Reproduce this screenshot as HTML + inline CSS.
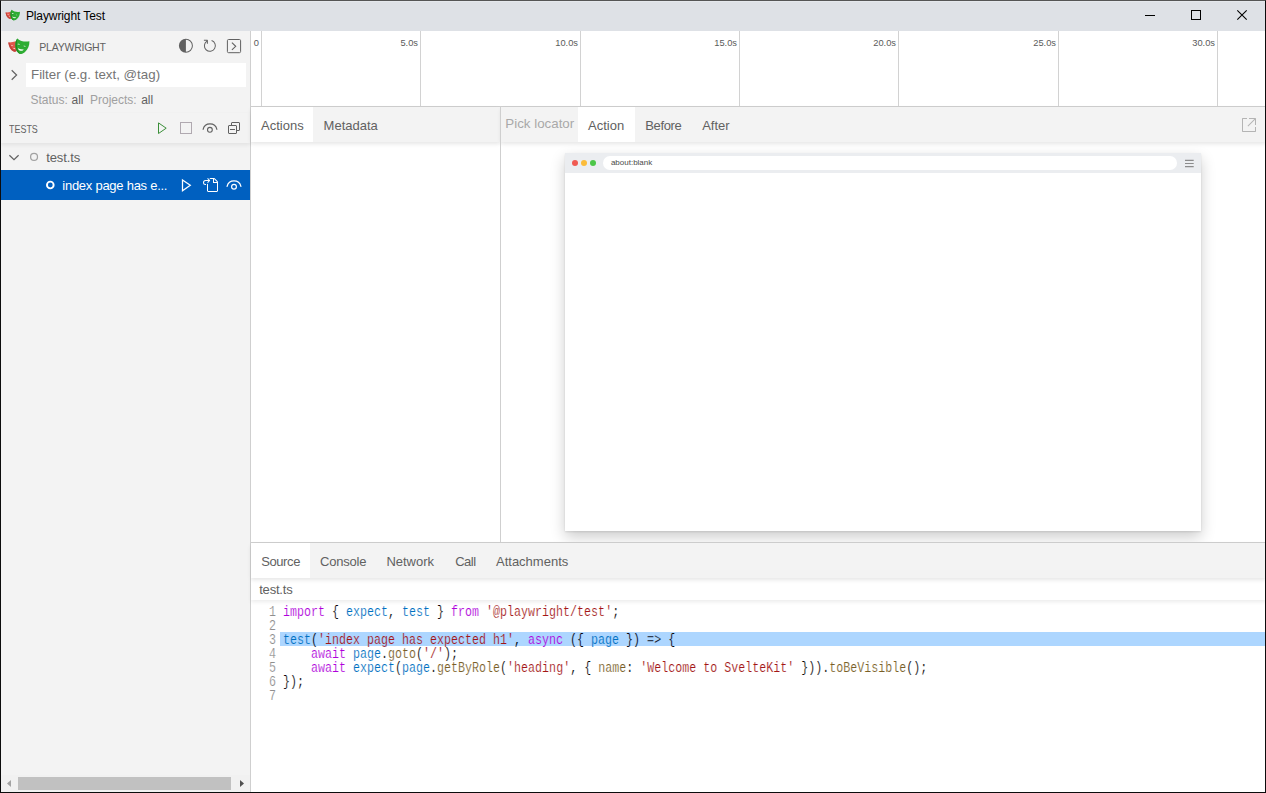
<!DOCTYPE html>
<html>
<head>
<meta charset="utf-8">
<title>Playwright Test</title>
<style>
*{box-sizing:border-box;margin:0;padding:0}
html,body{width:1266px;height:793px;overflow:hidden;background:#fff}
body{font-family:"Liberation Sans",sans-serif;font-size:13px;color:#616161;position:relative}
.abs{position:absolute}
.t{position:absolute;white-space:nowrap;line-height:1}
svg{position:absolute;overflow:visible}
/* window frame */
#frame{left:0;top:0;width:1266px;height:793px;border:1px solid #0c0c0c;border-top-color:#555;z-index:50;pointer-events:none}
#frame2{left:1px;top:1px;width:1264px;height:30px;border-top:1px solid #e5e8ec;border-left:1px solid #e5e8ec;z-index:49}
#titlebar{left:0;top:0;width:1266px;height:31px;background:#dee1e6}
#sidebar{left:0;top:31px;width:250px;height:762px;background:#f3f3f3}
#sideborder{left:250px;top:31px;width:1px;height:762px;background:#cfcfcf}
#filter{left:26px;top:63px;width:220px;height:24px;background:#fff}
#selrow{left:1px;top:170px;width:249px;height:30px;background:#0060c0}
/* timeline */
.grid{position:absolute;top:31px;width:1px;height:75px;background:#d2d2d2}
.tl{position:absolute;top:38.900px;font-size:9.300px;color:#5a5a5a;line-height:1;text-align:right;width:40px;white-space:nowrap}
#tlborder{left:251px;top:106px;width:1015px;height:1px;background:#cfcfcf}
/* tab bars */
.tabbar{position:absolute;background:#f3f3f3;box-shadow:0 2px 4px rgba(0,0,0,.10)}
.tabsel{position:absolute;background:#fff}
.tab{position:absolute;white-space:nowrap;line-height:1;font-size:13px;color:#616161}
/* code */
.ln{position:absolute;left:251px;width:25px;text-align:right;color:#8e8e8e}
.code,.ln{font-family:"Liberation Mono",monospace;font-size:15px;line-height:14px;height:14px;white-space:pre}
.code{position:absolute;left:283.400px;color:#000;-webkit-text-stroke:.18px #fff;transform:scaleX(.7778);transform-origin:0 0}
.ln span{display:inline-block;-webkit-text-stroke:.18px #fff;transform:scaleX(.7778);transform-origin:100% 0}
.k{color:#af00db}.v{color:#0070c1}.p{color:#795e26}.s{color:#a31515}
</style>
</head>
<body>
<!-- title bar -->
<div class="abs" id="titlebar"></div>
<div class="t" id="title" style="left:25.900px;top:10.300px;font-size:12px;color:#000;letter-spacing:-.1px">Playwright Test</div>

<!-- sidebar -->
<div class="abs" id="sidebar"></div>
<div class="abs" id="sideborder"></div>
<div class="t" id="pw" style="left:39.300px;top:42.200px;font-size:10.500px;color:#616161;letter-spacing:-.23px">PLAYWRIGHT</div>
<div class="abs" id="filter"></div>
<div class="t" id="ph" style="left:31px;top:68px;font-size:13.33px;color:#757575">Filter (e.g. text, @tag)</div>
<div class="t" id="st1" style="left:30.500px;top:93.500px;font-size:12px;color:#a0a0a0">Status:</div>
<div class="t" id="st2" style="left:71.500px;top:93.500px;font-size:12px;color:#616161">all</div>
<div class="t" id="st3" style="left:90px;top:93.500px;font-size:12px;color:#a0a0a0">Projects:</div>
<div class="t" id="st4" style="left:141.200px;top:93.500px;font-size:12px;color:#616161">all</div>
<div class="abs" style="left:1px;top:113px;width:249px;height:30px;background:#f3f3f3;box-shadow:0 2px 4px rgba(0,0,0,.07)"></div>
<div class="t" id="tests" style="left:9.300px;top:124.200px;font-size:10.500px;color:#616161;transform:scaleX(.852);transform-origin:0 0">TESTS</div>
<div class="t" id="f1" style="left:46.200px;top:151px;font-size:13px;color:#616161;letter-spacing:-.12px">test.ts</div>
<div class="abs" id="selrow"></div>
<div class="t" id="f2" style="left:62.300px;top:179px;font-size:13px;color:#fff;letter-spacing:-.26px">index page has e...</div>

<!-- timeline -->
<div class="grid" style="left:261px"></div>
<div class="grid" style="left:420px"></div>
<div class="grid" style="left:580px"></div>
<div class="grid" style="left:739px"></div>
<div class="grid" style="left:898px"></div>
<div class="grid" style="left:1058px"></div>
<div class="grid" style="left:1217px"></div>
<div class="tl" style="left:253.700px;text-align:left">0</div>
<div class="tl" style="left:378px">5.0s</div>
<div class="tl" style="left:538px">10.0s</div>
<div class="tl" style="left:697px">15.0s</div>
<div class="tl" style="left:856px">20.0s</div>
<div class="tl" style="left:1016px">25.0s</div>
<div class="tl" style="left:1175px">30.0s</div>

<div class="abs" id="tlborder"></div>

<!-- panels -->
<div class="tabbar" style="left:251px;top:107px;width:249px;height:35px"></div>
<div class="tabsel" style="left:251px;top:107px;width:62px;height:35px"></div>
<div class="tab" id="ta" style="left:261px;top:119px">Actions</div>
<div class="tab" id="tm" style="left:323.600px;top:119px">Metadata</div>
<div class="abs" style="left:500px;top:106px;width:1px;height:436px;background:#cfcfcf;z-index:3"></div>

<div class="tabbar" style="left:501px;top:107px;width:765px;height:35px"></div>
<div class="tabsel" style="left:578px;top:107px;width:56.700px;height:35px"></div>
<div class="tab" id="tp" style="left:505.300px;top:117.400px;color:#a9a9a9;font-size:13.33px">Pick locator</div>
<div class="tab" id="tc" style="left:588px;top:119px">Action</div>
<div class="tab" id="tb" style="left:645.200px;top:119px;letter-spacing:-.33px">Before</div>
<div class="tab" id="tf" style="left:702.200px;top:119px">After</div>

<!-- browser frame -->
<div class="abs" id="bf" style="left:565px;top:153px;width:636px;height:378px;background:#fff;box-shadow:0 6px 14px rgba(0,0,0,.2),0 1px 2px rgba(0,0,0,.1)"></div>
<div class="abs" id="bfh" style="left:565px;top:153px;width:636px;height:20px;background:#ebedf0"></div>
<div class="abs" style="left:603.300px;top:156.200px;width:573.500px;height:13.600px;border-radius:7px;background:#fff"></div>
<div class="t" id="ab" style="left:610.900px;top:158.700px;font-size:8px;color:#4a4a4a">about:blank</div>
<div class="abs" style="left:572.200px;top:160.200px;width:6.200px;height:6.200px;border-radius:3.100px;background:#f05a52"></div>
<div class="abs" style="left:581.200px;top:160.200px;width:6.200px;height:6.200px;border-radius:3.100px;background:#fbbc3a"></div>
<div class="abs" style="left:590.200px;top:160.200px;width:6.200px;height:6.200px;border-radius:3.100px;background:#4cc648"></div>

<!-- bottom -->
<div class="abs" style="left:251px;top:542px;width:1015px;height:1px;background:#cfcfcf"></div>
<div class="abs" style="left:251px;top:578px;width:1015px;height:22px;background:#fff;box-shadow:0 2px 4px rgba(0,0,0,.08)"></div>
<div class="tabbar" style="left:251px;top:543px;width:1015px;height:35px"></div>
<div class="tabsel" style="left:251px;top:543px;width:59px;height:35px"></div>
<div class="tab" id="b1" style="left:261.200px;top:555px;letter-spacing:-.4px">Source</div>
<div class="tab" id="b2" style="left:320px;top:555px;letter-spacing:-.2px">Console</div>
<div class="tab" id="b3" style="left:386.400px;top:555px">Network</div>
<div class="tab" id="b4" style="left:455.200px;top:555px;letter-spacing:-.5px">Call</div>
<div class="tab" id="b5" style="left:496px;top:555px">Attachments</div>
<div class="t" id="fn" style="left:259.200px;top:583px;font-size:13px;color:#616161;letter-spacing:-.2px">test.ts</div>

<!-- code -->
<div class="abs" id="hl" style="left:280px;top:632px;width:986px;height:14px;background:#add6ff"></div>
<div class="ln" style="top:606px"><span>1</span></div><div class="code" style="top:606px"><span class="k">import</span> { <span class="v">expect</span>, <span class="v">test</span> } <span class="k">from</span> <span class="s">'@playwright/test'</span>;</div>
<div class="ln" style="top:620px"><span>2</span></div><div class="code" style="top:620px"></div>
<div class="ln" style="top:634px"><span>3</span></div><div class="code" style="top:634px;-webkit-text-stroke-color:#add6ff"><span class="v">test</span>(<span class="s">'index page has expected h1'</span>, <span class="k">async</span> ({ <span class="v">page</span> }) =&gt; {</div>
<div class="ln" style="top:648px"><span>4</span></div><div class="code" style="top:648px">    <span class="k">await</span> <span class="v">page</span>.<span class="p">goto</span>(<span class="s">'/'</span>);</div>
<div class="ln" style="top:662px"><span>5</span></div><div class="code" style="top:662px">    <span class="k">await</span> <span class="v">expect</span>(<span class="v">page</span>.<span class="p">getByRole</span>(<span class="s">'heading'</span>, { <span class="p">name</span>: <span class="s">'Welcome to SvelteKit'</span> })).<span class="p">toBeVisible</span>();</div>
<div class="ln" style="top:676px"><span>6</span></div><div class="code" style="top:676px">});</div>
<div class="ln" style="top:690px"><span>7</span></div><div class="code" style="top:690px"></div>


<svg id="icons" width="1266" height="793" viewBox="0 0 1266 793" style="left:0;top:0;z-index:20" fill="none">
<defs><g id="mask">
<path d="M6.300 10.400 C8.600 10.600 11.400 10.200 13.900 9.300 L14.600 18.900 C13.600 19.800 12.300 19.900 11.200 19.300 C8.600 17.900 6.900 14.600 6.300 10.400Z" fill="#e2574c"/>
<path d="M6.300 10.400 C6.900 14.600 8.600 17.900 11.200 19.300 C12.300 19.900 13.600 19.800 14.600 18.900 L14.500 17.600 C12.500 18.600 9.200 16.800 7.600 10.500Z" fill="#c2423a"/>
<path d="M8.900 13.600c.5-.5 1.500-.6 2.300-.2-.6.500-1.600.600-2.300.2z M11 16.900c.6-.5 1.500-.7 2.300-.4-.5.600-1.500.800-2.300.4z" fill="#fff"/>
<path d="M15.300 6.400 C18.600 9.200 22.900 10.200 27.400 9.300 C27.600 13.500 26 17.500 23 20 C21.800 21 20.600 21.800 19.300 22 C18.300 22.100 17.300 21.700 16.400 21 C14.200 19.200 13 15.500 13.500 11 C13.700 9.300 14.400 7.700 15.300 6.400Z" fill="#2ead33"/>
<path d="M15.300 6.400 C14.400 7.700 13.700 9.300 13.500 11 C13 15.500 14.200 19.200 16.400 21 C17.300 21.700 18.300 22.100 19.300 22 C16.800 20.800 14.900 17.300 14.900 12.500 C14.900 10.200 15 8.200 15.300 6.400Z" fill="#1d8d22"/>
<path d="M15.200 12.700c.8-.5 2.100-.4 3 .3-.9.700-2.200.5-3-.3z M21.100 14.500c.8-.5 2.100-.3 2.900.5-1 .6-2.200.4-2.900-.5z" fill="#1d8d22"/>
<path d="M15.400 12.200c.7-.7 1.900-.6 2.800.1-.9.400-2 .4-2.800-.1z M21.300 14c.8-.6 2-.4 2.700.4-.9.300-1.900.2-2.700-.4z M15.800 16.200c1.900.9 3.900 1.300 6 1.300-.7 1-1.900 1.500-3.200 1.200-1.300-.3-2.300-1.200-2.800-2.500z" fill="#fff"/>
</g></defs>
<!-- title icon -->
<use href="#mask" transform="translate(1.300,5.400) scale(.68)"/>
<!-- window controls -->
<path d="M1145 15.500H1155" stroke="#000" stroke-width="1"/>
<rect x="1191.500" y="10.500" width="9" height="9" stroke="#000" stroke-width="1"/>
<path d="M1237.300 10.300L1246.700 19.700M1246.700 10.300L1237.300 19.700" stroke="#000" stroke-width="1.100"/>
<!-- sidebar logo -->
<use href="#mask" transform="translate(2,32)"/>
<!-- color mode -->
<g transform="translate(177.900,37.800)" fill="#616161"><path d="M8 1a7 7 0 1 0 0 14A7 7 0 0 0 8 1zm0 13V2a6 6 0 1 1 0 12z"/></g>
<!-- refresh -->
<g transform="translate(201.900,37.800)" fill="#616161"><path d="M4.681 3H2V2h3.500l.5.5V6H5V4a5 5 0 1 0 4.530-.761l.302-.954A6 6 0 1 1 4.681 3z"/></g>
<!-- terminal -->
<rect x="227.400" y="39.500" width="13.200" height="13.200" rx="1.200" stroke="#616161"/>
<path d="M231.900 42.700L235.700 46.300L231.900 49.900" stroke="#616161" stroke-width="1.100"/>
<!-- filter chevron -->
<path d="M11.700 70.300L16.600 75L11.700 79.700" stroke="#616161" stroke-width="1.200"/>
<!-- tests toolbar -->
<path d="M158.500 122.900L166.200 128.200L158.500 133.500Z" stroke="#3a8f38" stroke-width="1"/>
<rect x="180.500" y="122.500" width="11" height="11" stroke="#b0a9b0" stroke-width="1"/>
<path d="M203.100 129.300A7.100 7.100 0 0 1 216.900 129.300" stroke="#616161" stroke-width="1.150" stroke-linecap="round"/>
<circle cx="209.900" cy="129.800" r="2.400" stroke="#616161" stroke-width="1.100"/>
<g transform="translate(226,120)" fill="#616161"><path d="M9 9H4v1h5V9z"/><path fill-rule="evenodd" d="M5 3l1-1h7l1 1v7l-1 1h-2v2l-1 1H3l-1-1V6l1-1h2V3zm1 2h4l1 1v4h2V3H6v2zm4 1H3v7h7V6z"/></g>
<!-- tree -->
<path d="M9.400 155.200L14 159.600L18.600 155.200" stroke="#616161" stroke-width="1.200"/>
<circle cx="34.050" cy="156.900" r="3.450" stroke="#a2a2a2" stroke-width="1.250"/>
<circle cx="50.300" cy="185" r="3.350" stroke="#fff" stroke-width="1.900"/>
<!-- row actions -->
<path d="M182.500 179.900L190.300 185.300L182.500 190.700Z" stroke="#fff" stroke-width="1.250"/>
<g transform="translate(202,177)" fill="#fff"><path d="M6 5.914l2.060-2.060v-.708L5.915 1l-.707.707.043.043.25.25 1 1h-3a2.500 2.500 0 0 0 0 5H4V7h-.5a1.500 1.500 0 1 1 0-3h3L5.207 5.293 5.914 6 6 5.914zM11 2H8.328l-1-1H12l.71.290 3 3L16 5v9l-1 1H6l-1-1V6.500l1 .847V14h9V6h-4V2zm1 0v3h3l-3-3z"/></g>
<path d="M227.100 186.300A7.100 7.100 0 0 1 240.900 186.300" stroke="#fff" stroke-width="1.250" stroke-linecap="round"/>
<circle cx="234" cy="186.800" r="2.400" stroke="#fff" stroke-width="1.200"/>
<!-- popout -->
<g transform="translate(1241,117)" fill="#b4b4b4"><path d="M1.500 1H6v1H2v12h12v-4h1v4.500l-.5.5h-13l-.5-.5v-13l.5-.5z"/><path d="M15 1.500V8h-1V2.707L7.243 9.465l-.707-.708L13.293 2H8V1h6.500l.5.5z"/></g>
<!-- hamburger -->
<path d="M1185 160.400H1193.700M1185 163.500H1193.700M1185 166.600H1193.700" stroke="#8c8c8c" stroke-width="1.200"/>
<!-- scrollbar -->
<rect x="1" y="775" width="249" height="17" fill="#f1f1f1"/>
<rect x="18" y="777" width="213" height="13" fill="#c1c1c1"/>
<path d="M7 783.500L11 780V787Z" fill="#a3a3a3"/>
<path d="M244 783.500L240 780V787Z" fill="#505050"/>
</svg>
<div class="abs" id="frame2"></div>
<div class="abs" id="frame"></div>
</body>
</html>
